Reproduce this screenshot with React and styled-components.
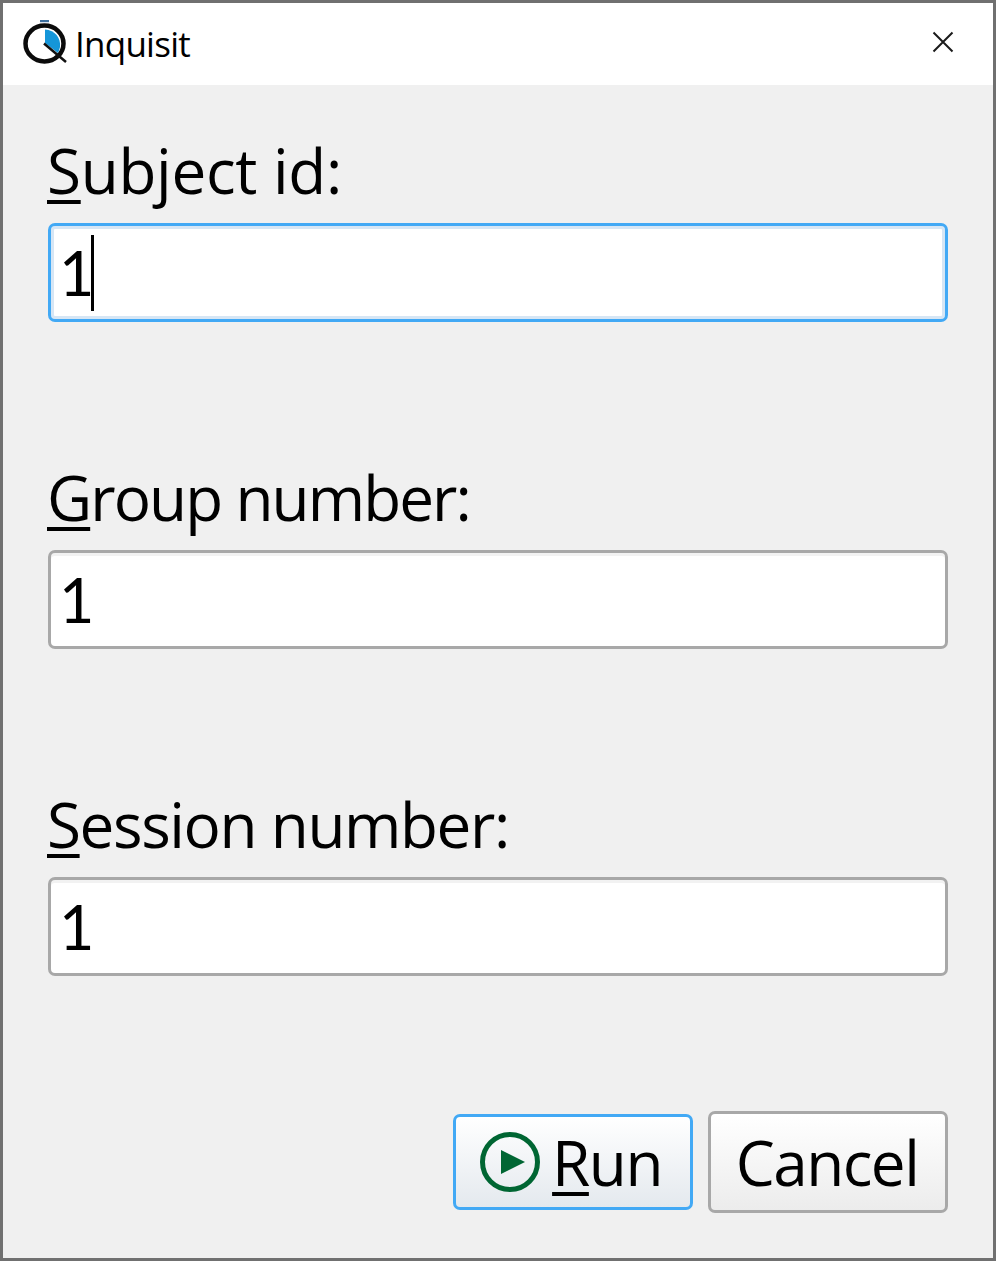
import React from "react";
import styled, { createGlobalStyle } from "styled-components";

const Global = createGlobalStyle`
  html, body { margin: 0; padding: 0; background: #f0f0f0; }
  * { box-sizing: border-box; }
`;

const Win = styled.div`
  width: 996px;
  height: 1261px;
  border: 3px solid #707070;
  display: flex;
  flex-direction: column;
  background: #f0f0f0;
  font-family: "Open Sans", "Noto Sans", sans-serif;
  color: #000;
  overflow: hidden;
`;

const TitleBar = styled.div`
  height: 82px;
  background: #fff;
  display: flex;
  align-items: center;
  padding: 0 39px 0 20px;
  flex: none;
`;

const LogoWrap = styled.div`
  width: 46px;
  height: 46px;
  margin-bottom: 2px;
  flex: none;
`;

const AppTitle = styled.span`
  font-size: 35px;
  line-height: 50px;
  margin-left: 6px;
  letter-spacing: -0.75px;
  flex: 1;
`;

const CloseWrap = styled.div`
  width: 22px;
  height: 22px;
  margin-bottom: 4px;
  flex: none;
`;

const Body = styled.div`
  flex: 1;
  display: flex;
  flex-direction: column;
  padding: 47px 45px 45px;
`;

const Field = styled.div`
  display: flex;
  flex-direction: column;
  height: 327px;
  &:nth-child(3) {
    height: 325px;
  }
`;

const Label = styled.label`
  font-size: 62px;
  line-height: 76px;
  height: 91px;
  margin-left: -1px;
  letter-spacing: ${(p) => p.$track}px;
  white-space: nowrap;
`;

const U = styled.span`
  text-decoration: underline;
  text-decoration-thickness: 4px;
  text-underline-offset: 6px;
`;

const InputBox = styled.div`
  width: 900px;
  height: 99px;
  background: #fff;
  border: 3px solid ${(p) => (p.$focus ? "#42a9f5" : "#a8a8a8")};
  box-shadow: ${(p) => (p.$focus ? "inset 0 0 0 3px #d6e6f5" : "inset 0 3px 0 #f2f2f2")};
  border-radius: 7px;
  display: flex;
  align-items: center;
  padding-left: 8px;
  font-family: "Lato", sans-serif;
  font-size: 61px;
  line-height: 76px;
`;

const Caret = styled.span`
  width: 3px;
  height: 76px;
  background: #000;
  margin-left: -3px;
`;

const Buttons = styled.div`
  margin-top: auto;
  display: flex;
  justify-content: flex-end;
  gap: 15px;
  align-items: center;
`;

const Btn = styled.button`
  width: 240px;
  height: ${(p) => (p.$primary ? "96px" : "102px")};
  border: 3px solid ${(p) => (p.$primary ? "#42a9f5" : "#a8a8a8")};
  border-radius: 7px;
  background: linear-gradient(#ffffff, ${(p) => (p.$primary ? "#e4e9ee" : "#ececec")});
  font: inherit;
  font-size: 62px;
  line-height: 76px;
  letter-spacing: -1.5px;
  color: #000;
  display: flex;
  align-items: center;
  justify-content: center;
  gap: 12px;
  padding: 0 ${(p) => (p.$primary ? "4px" : "2px")} 0 0;
`;

const Logo = () => (
  <svg width="46" height="46" viewBox="0 0 46 46">
    <rect x="17" y="0" width="9" height="2.2" fill="#3d6f9e" />
    <ellipse cx="21.5" cy="23.5" rx="19" ry="18" fill="none" stroke="#0b0b0b" strokeWidth="4.5" />
    <path d="M22 9.5 C32 10 38 18 37 27 C36.5 29 36 31 35 33 L22 23 Z" fill="#1596d9" />
    <path d="M21 23.5 L43 42" stroke="#111" strokeWidth="2.5" />
  </svg>
);

const Close = () => (
  <svg width="22" height="22" viewBox="0 0 22 22">
    <path d="M1.5 1.5 L20.5 20.5 M20.5 1.5 L1.5 20.5" stroke="#1a1a1a" strokeWidth="2" />
  </svg>
);

const Play = () => (
  <svg width="60" height="60" viewBox="0 0 60 60" style={{ flex: "none" }}>
    <circle cx="30" cy="30" r="27.5" fill="none" stroke="#006633" strokeWidth="5" />
    <path d="M21 18 L45 30 L21 42 Z" fill="#006633" />
  </svg>
);

const fields = [
  { first: "S", rest: "ubject id:", focus: true, track: -0.3 },
  { first: "G", rest: "roup number:", track: -1.9 },
  { first: "S", rest: "ession number:", track: -1.4 },
];

export default function App() {
  return (
    <Win>
      <Global />
      <TitleBar>
        <LogoWrap>
          <Logo />
        </LogoWrap>
        <AppTitle>Inquisit</AppTitle>
        <CloseWrap>
          <Close />
        </CloseWrap>
      </TitleBar>
      <Body>
        {fields.map((f) => (
          <Field key={f.rest}>
            <Label $track={f.track}>
              <U>{f.first}</U>
              {f.rest}
            </Label>
            <InputBox $focus={f.focus}>
              1{f.focus && <Caret />}
            </InputBox>
          </Field>
        ))}
        <Buttons>
          <Btn $primary>
            <Play />
            <span>
              <U>R</U>un
            </span>
          </Btn>
          <Btn>Cancel</Btn>
        </Buttons>
      </Body>
    </Win>
  );
}
